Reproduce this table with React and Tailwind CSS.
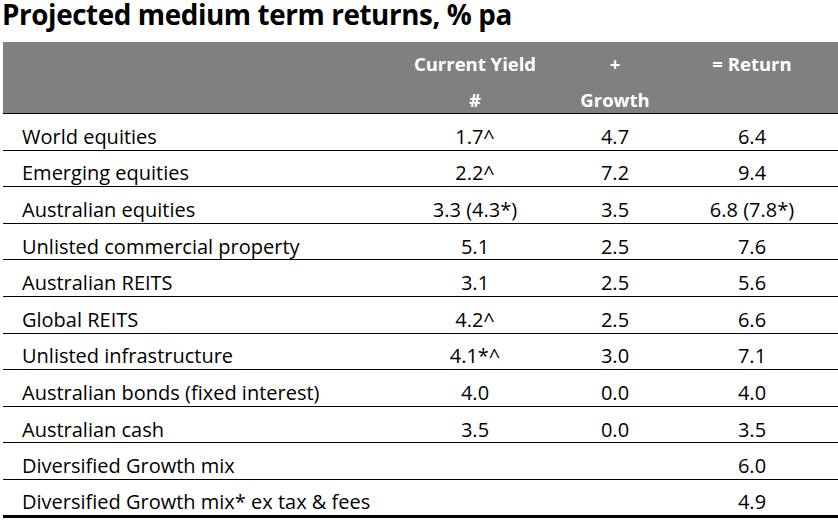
import React from "react";

const rows = [
  ["World equities", "1.7^", "4.7", "6.4"],
  ["Emerging equities", "2.2^", "7.2", "9.4"],
  ["Australian equities", "3.3 (4.3*)", "3.5", "6.8 (7.8*)"],
  ["Unlisted commercial property", "5.1", "2.5", "7.6"],
  ["Australian REITS", "3.1", "2.5", "5.6"],
  ["Global REITS", "4.2^", "2.5", "6.6"],
  ["Unlisted infrastructure", "4.1*^", "3.0", "7.1"],
  ["Australian bonds (fixed interest)", "4.0", "0.0", "4.0"],
  ["Australian cash", "3.5", "0.0", "3.5"],
  ["Diversified Growth mix", "", "", "6.0"],
  ["Diversified Growth mix* ex tax & fees", "", "", "4.9"],
];

export default function App() {
  return (
    <div className="w-[838px] h-[521px] bg-white overflow-hidden text-black" style={{ fontFamily: '"Open Sans", "Noto Sans", sans-serif' }}>
      <div className="h-[42px]">
        <h1 className="pl-[2px] text-[27.8px] font-bold leading-[28px] tracking-[-0.4px]">
          Projected medium term returns, % pa
        </h1>
      </div>
      <div className="ml-[3px] w-[835px]">
        <div className="grid grid-cols-[402px_140px_140px_134px_1fr] h-[72px] bg-[#808080] border-b border-black text-white font-bold text-[18.5px]">
          <div />
          <div className="flex flex-col items-center pt-[4px] leading-[36px]">
            <span>Current Yield</span>
            <span>#</span>
          </div>
          <div className="flex flex-col items-center pt-[4px] leading-[36px]">
            <span>+</span>
            <span>Growth</span>
          </div>
          <div className="flex flex-col items-center pt-[4px] leading-[36px]">
            <span>= Return</span>
          </div>
          <div />
        </div>
        {rows.map((r, i) => (
          <div
            key={i}
            className={`grid grid-cols-[402px_140px_140px_134px_1fr] items-center ${i === rows.length - 1 ? "h-[38px] border-b-[3px]" : "h-[36.6px] border-b"} text-[20px] leading-[24px] border-black`}
          >
            <div className="pl-[19px] pt-[10px]">{r[0]}</div>
            <div className="text-center pt-[10px]">{r[1]}</div>
            <div className="text-center pt-[10px]">{r[2]}</div>
            <div className="text-center pt-[10px]">{r[3]}</div>
            <div />
          </div>
        ))}
      </div>
    </div>
  );
}
